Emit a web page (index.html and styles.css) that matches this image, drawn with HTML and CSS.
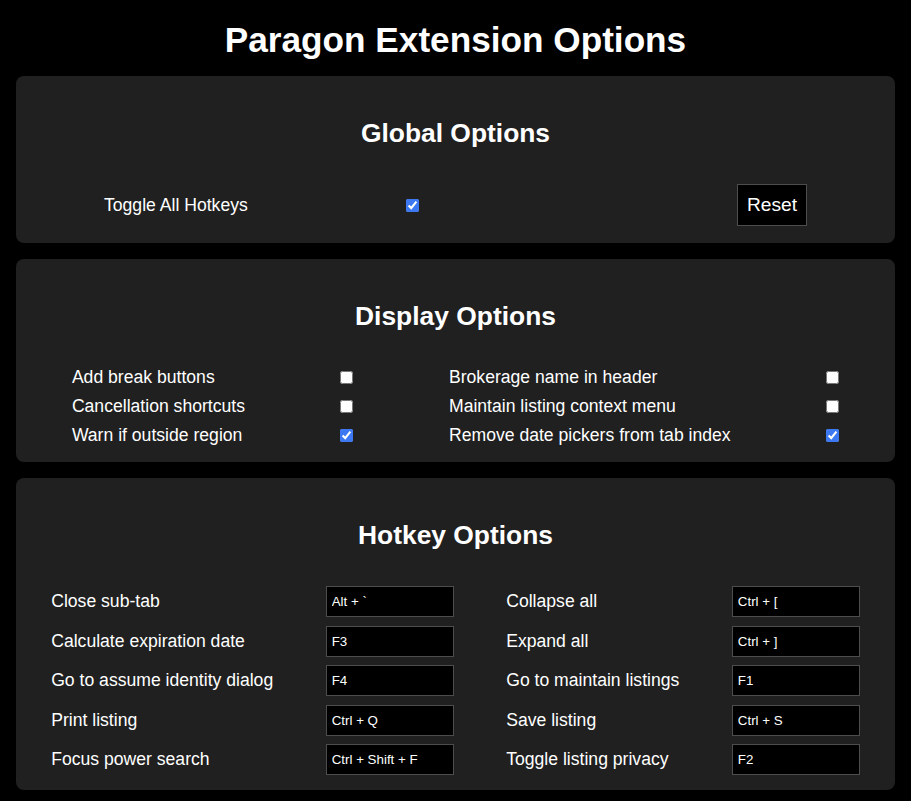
FILE: index.html
```html
<!DOCTYPE html>
<html lang="en">
<head>
<meta charset="utf-8">
<title>Paragon Extension Options</title>
<link rel="stylesheet" href="styles.css">
</head>
<body>
<h1 class="title">Paragon Extension Options</h1>

<section class="panel panel-global">
  <h2 class="panel-title">Global Options</h2>
  <div class="global-row">
    <label class="label" for="toggle-all">Toggle All Hotkeys</label>
    <input class="check" type="checkbox" id="toggle-all" checked>
    <button class="reset" type="button">Reset</button>
  </div>
</section>

<section class="panel panel-display">
  <h2 class="panel-title">Display Options</h2>
  <div class="display-grid">
    <span class="label">Add break buttons</span><input class="check" type="checkbox">
    <span class="label">Brokerage name in header</span><input class="check" type="checkbox">
    <span class="label">Cancellation shortcuts</span><input class="check" type="checkbox">
    <span class="label">Maintain listing context menu</span><input class="check" type="checkbox">
    <span class="label">Warn if outside region</span><input class="check" type="checkbox" checked>
    <span class="label">Remove date pickers from tab index</span><input class="check" type="checkbox" checked>
  </div>
</section>

<section class="panel panel-hotkey">
  <h2 class="panel-title">Hotkey Options</h2>
  <div class="hotkey-grid">
    <span class="label">Close sub-tab</span><input class="key" type="text" value="Alt + `">
    <span class="label">Collapse all</span><input class="key" type="text" value="Ctrl + [">
    <span class="label">Calculate expiration date</span><input class="key" type="text" value="F3">
    <span class="label">Expand all</span><input class="key" type="text" value="Ctrl + ]">
    <span class="label">Go to assume identity dialog</span><input class="key" type="text" value="F4">
    <span class="label">Go to maintain listings</span><input class="key" type="text" value="F1">
    <span class="label">Print listing</span><input class="key" type="text" value="Ctrl + Q">
    <span class="label">Save listing</span><input class="key" type="text" value="Ctrl + S">
    <span class="label">Focus power search</span><input class="key" type="text" value="Ctrl + Shift + F">
    <span class="label">Toggle listing privacy</span><input class="key" type="text" value="F2">
  </div>
</section>
</body>
</html>
```

FILE: styles.css
```css
html, body {
  background: #000;
}
body {
  margin: 0;
  padding: 0 16px 11px;
  color: #fff;
  font-family: "Liberation Sans", Arial, sans-serif;
}
.title {
  margin: 20px 0 15.5px;
  font-size: 35.2px;
  font-weight: bold;
  line-height: 40.5px;
  text-align: center;
}
.panel {
  background: #202020;
  border-radius: 8px;
  padding-top: 41.6px;
  margin-bottom: 16px;
}
.panel-title {
  margin: 0;
  font-size: 26.4px;
  font-weight: bold;
  line-height: 30.4px;
  text-align: center;
}
.label {
  font-size: 17.6px;
  line-height: 20.2px;
  color: #fff;
}
.check {
  width: 13px;
  height: 13px;
  margin: 0;
  accent-color: #3b78f2;
}

/* Global */
.panel-global {
  padding-bottom: 17px;
}
.global-row {
  display: grid;
  grid-template-columns: 302px 331px 70px;
  align-items: center;
  margin-top: 36px;
  padding-left: 88px;
}
.reset {
  width: 70px;
  height: 42px;
  padding: 0;
  background: #000;
  color: #fff;
  border: 1px solid #4d4d4d;
  font-family: "Liberation Sans", Arial, sans-serif;
  font-size: 19.2px;
}

/* Display */
.panel-display {
  padding-bottom: 12.5px;
}
.display-grid {
  display: grid;
  grid-template-columns: auto 13px auto 13px;
  grid-auto-rows: 29px;
  column-gap: 95.5px;
  align-items: center;
  justify-content: center;
  margin-top: 31.5px;
}

/* Hotkeys */
.panel-hotkey {
  padding-bottom: 15px;
}
.hotkey-grid {
  display: grid;
  grid-template-columns: auto 128px auto 128px;
  grid-auto-rows: 31px;
  column-gap: 52.5px;
  row-gap: 8.5px;
  align-items: center;
  justify-content: center;
  margin-top: 36px;
}
.key {
  box-sizing: border-box;
  width: 128px;
  height: 31px;
  margin: 0;
  padding: 0 5px;
  background: #000;
  color: #fff;
  border: 1px solid #4d4d4d;
  font-family: "Liberation Sans", Arial, sans-serif;
  font-size: 13.33px;
}
```
